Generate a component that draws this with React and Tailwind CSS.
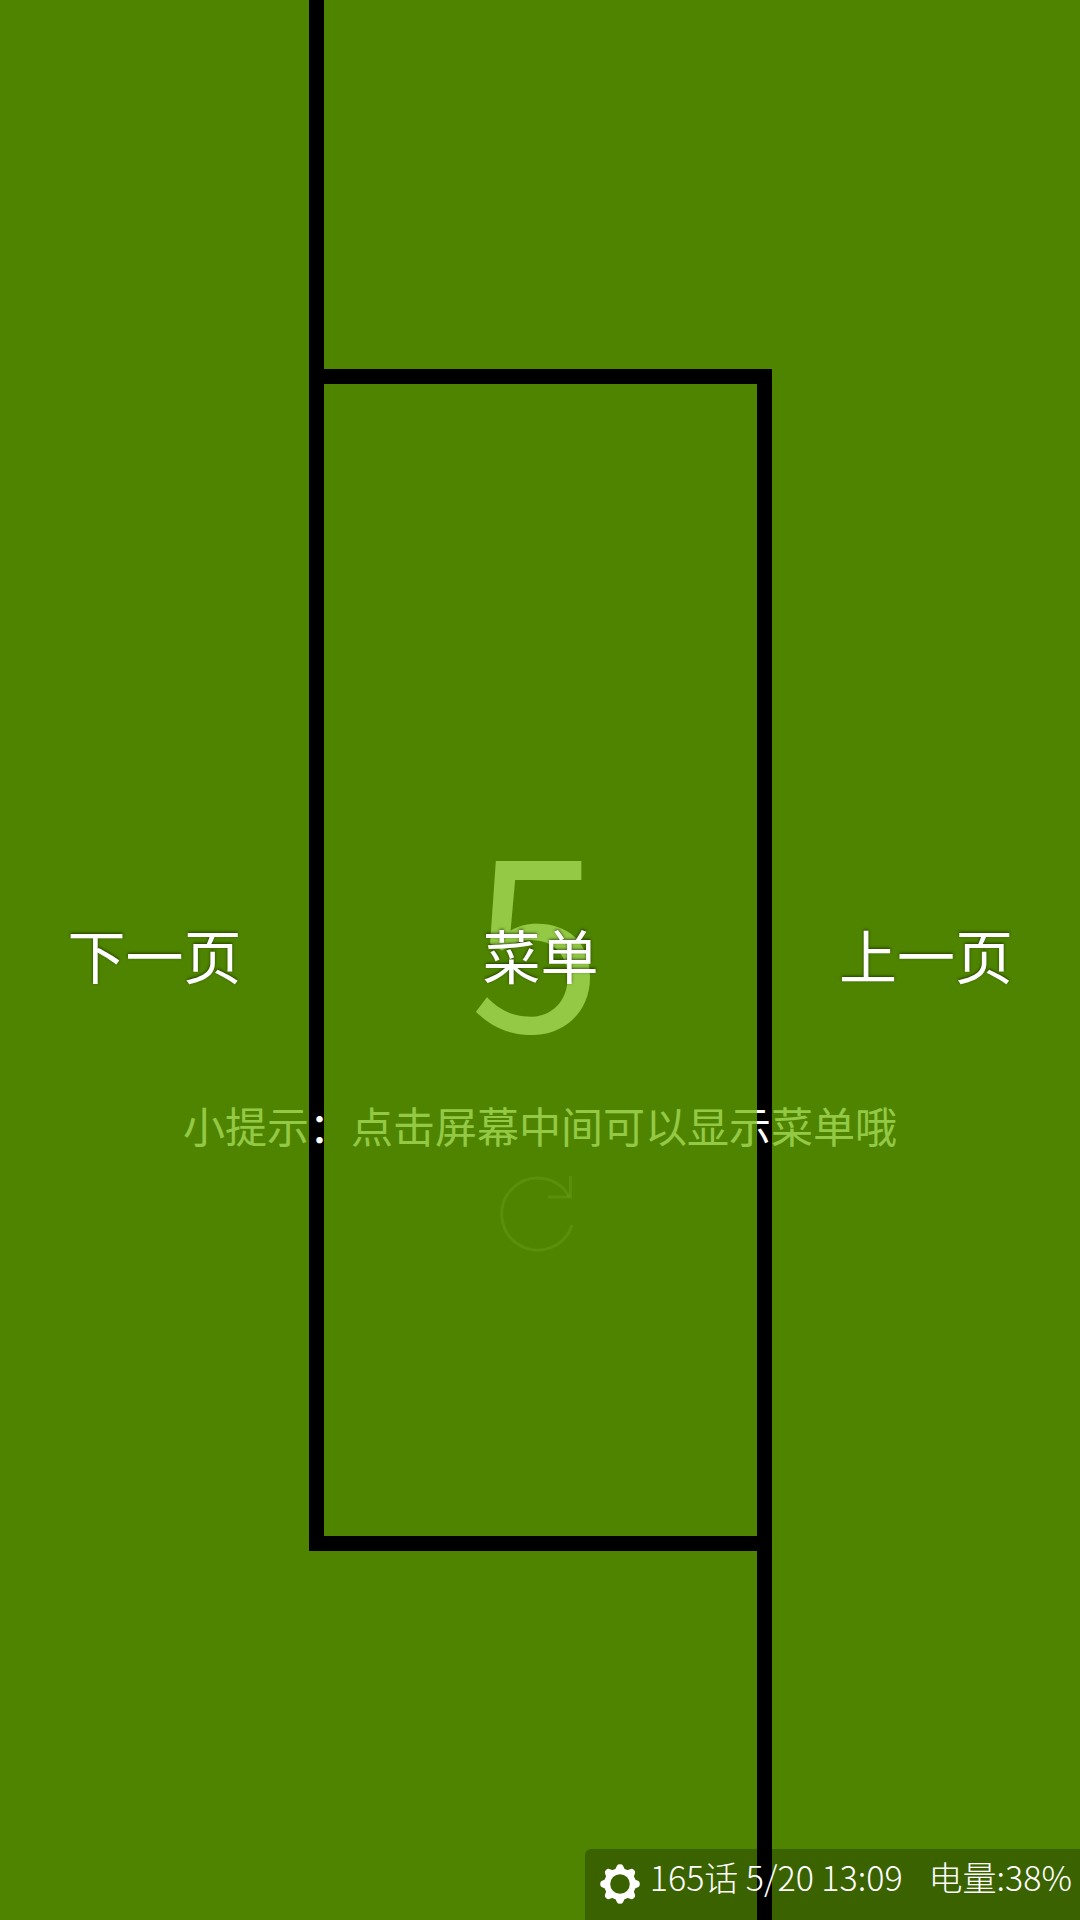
const panel = "bg-[#6bb500]/73";
const label =
  "flex items-center justify-center text-[58px] leading-none text-white pb-3 cursor-pointer [text-shadow:0_-1px_3px_rgba(0,0,0,0.55)]";

function RefreshIcon() {
  return (
    <svg className="h-[76px] w-[76px] text-white/17" viewBox="0 0 76 76" fill="none" stroke="currentColor" strokeWidth="3" aria-hidden="true">
      <path d="M70.2 20.5A36 36 0 1 0 73 49" />
      <path d="M71.5 0V21H49" />
    </svg>
  );
}

function GearIcon() {
  const teeth = [0, 45, 90, 135, 180, 225, 270, 315];
  return (
    <svg className="h-10 w-10 text-white" viewBox="-20 -20 40 40" aria-hidden="true">
      <circle r="12.8" fill="none" stroke="currentColor" strokeWidth="6" />
      {teeth.map((angle) => (
        <path
          key={angle}
          transform={`rotate(${angle})`}
          d="M-4.8 -14.5L-2.9 -18.4Q-2.4 -19.8 0 -19.8Q2.4 -19.8 2.9 -18.4L4.8 -14.5Z"
          fill="currentColor"
        />
      ))}
    </svg>
  );
}

export default function App() {
  return (
    <main className="relative flex min-h-screen flex-col bg-black font-['Noto_Sans_CJK_SC',sans-serif] text-white">
      <section className="flex flex-1 flex-col items-center justify-center pt-[140px]">
        <p className="pr-2 text-[240px] leading-[240px]">5</p>
        <p className="mt-[52px] text-[42px] leading-[50px]">小提示：点击屏幕中间可以显示菜单哦</p>
        <button type="button" aria-label="刷新" className="mt-[26px] pr-[6px]">
          <RefreshIcon />
        </button>
      </section>

      <nav
        aria-label="翻页区域"
        className="absolute inset-0 grid grid-cols-[309fr_15px_433fr_15px_308fr] grid-rows-[369fr_15px_1152fr_15px_369fr]"
      >
        <button type="button" className={`${panel} ${label} col-start-1 row-start-1 row-end-6`}>下一页</button>
        <div className={`${panel} col-start-2 col-end-4 row-start-5`} />
        <button type="button" className={`${panel} ${label} col-start-3 row-start-3`}>菜单</button>
        <div className={`${panel} col-start-3 col-end-5 row-start-1`} />
        <button type="button" className={`${panel} ${label} col-start-5 row-start-1 row-end-6`}>上一页</button>
      </nav>

      <footer className="absolute right-0 bottom-0 flex h-[71px] items-start rounded-tl-md bg-black/25 pr-2 pl-[15px] text-[34px] leading-[56px] font-light">
        <button type="button" aria-label="设置" className="mt-[15px] mr-[10px]">
          <GearIcon />
        </button>
        <span className="mr-[26px] whitespace-nowrap">165话 5/20 13:09</span>
        <span className="whitespace-nowrap">电量:38%</span>
      </footer>
    </main>
  );
}
